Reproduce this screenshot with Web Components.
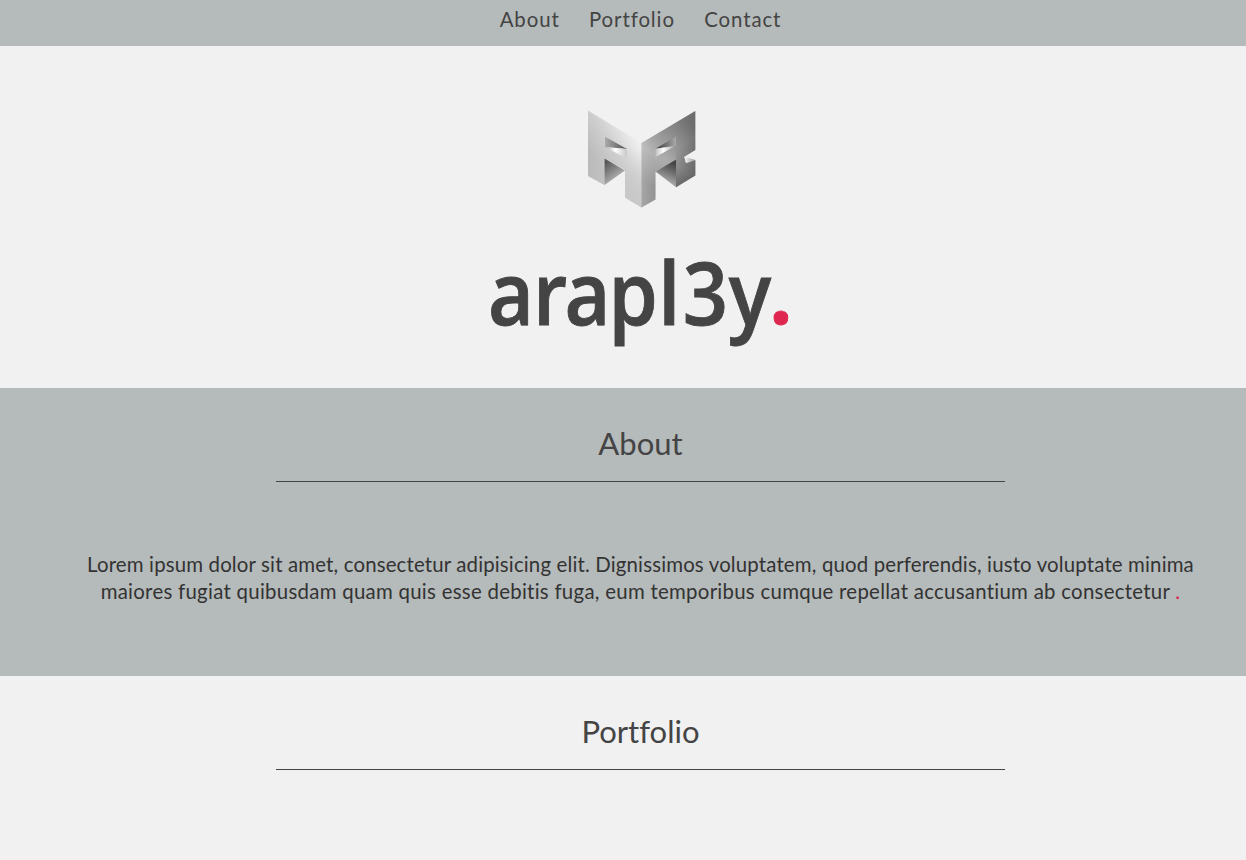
<!DOCTYPE html>
<html lang="en"><head><meta charset="utf-8"><title>arapl3y</title>
<style>
html,body{margin:0;background:#f1f1f1}
html{overflow:hidden}
body{height:860px;overflow:hidden;font-family:Lato,"Open Sans",sans-serif;color:#444}
</style></head><body>
<ar-page>
  <ar-nav></ar-nav>
  <ar-hero></ar-hero>
  <ar-section tone="dark" heading="About"><ar-copy></ar-copy></ar-section>
  <ar-section heading="Portfolio"></ar-section>
</ar-page>
<script>
const define=(name,html)=>customElements.define(name,class extends HTMLElement{
  constructor(){super();this.attachShadow({mode:'open'}).innerHTML=html;}
  connectedCallback(){const h=this.shadowRoot.querySelector('h2');if(h)h.textContent=this.getAttribute('heading');}
});
define('ar-page',`<style>:host{display:block;width:1281px}</style><slot></slot>`);
define('ar-nav',`<style>
:host{display:block;height:46px;background:#b5baba}
nav{display:flex;justify-content:center;gap:29.3px;padding-top:7px}
a{font-size:20.4px;line-height:24px;color:#444;text-decoration:none;letter-spacing:.92px;white-space:nowrap}
</style><nav><a>About</a><a>Portfolio</a><a>Contact</a></nav>`);
define('ar-mark',`<style>:host{display:block;width:110px;height:100px}svg{display:block}</style>
<svg width="110" height="100" viewBox="586 109 110 100">
<defs>
<linearGradient id="l" x1="588" y1="165" x2="640" y2="135" gradientUnits="userSpaceOnUse"><stop stop-color="#b4b4b4"/><stop offset=".55" stop-color="#d2d2d2"/><stop offset="1" stop-color="#f6f6f6"/></linearGradient>
<linearGradient id="l2" x1="0" y1="150" x2="0" y2="208" gradientUnits="userSpaceOnUse"><stop stop-color="#c8c8c8" stop-opacity="0"/><stop offset="1" stop-color="#c8c8c8"/></linearGradient>
<linearGradient id="r" x1="650" y1="185" x2="686" y2="122" gradientUnits="userSpaceOnUse"><stop stop-color="#8c8c8c"/><stop offset=".4" stop-color="#b0b0b0"/><stop offset="1" stop-color="#777"/></linearGradient>
<linearGradient id="r2" x1="641" y1="0" x2="695" y2="0" gradientUnits="userSpaceOnUse"><stop stop-color="#ddd" stop-opacity=".35"/><stop offset=".45" stop-color="#999" stop-opacity=".1"/><stop offset="1" stop-color="#555" stop-opacity=".35"/></linearGradient>
<linearGradient id="s" x1="672" y1="152" x2="692" y2="180" gradientUnits="userSpaceOnUse"><stop stop-color="#444" stop-opacity="0"/><stop offset="1" stop-color="#444" stop-opacity=".6"/></linearGradient>
<linearGradient id="d" x1="604" y1="163" x2="617" y2="180" gradientUnits="userSpaceOnUse"><stop stop-color="#555"/><stop offset="1" stop-color="#b5b5b5"/></linearGradient>
<linearGradient id="e" x1="674" y1="163" x2="666" y2="181" gradientUnits="userSpaceOnUse"><stop stop-color="#444"/><stop offset=".5" stop-color="#707070"/><stop offset="1" stop-color="#a5a5a5"/></linearGradient>
<linearGradient id="h" x1="605" y1="0" x2="627" y2="0" gradientUnits="userSpaceOnUse"><stop stop-color="#aaa"/><stop offset="1" stop-color="#505050"/></linearGradient>
<linearGradient id="w" x1="605" y1="0" x2="627" y2="0" gradientUnits="userSpaceOnUse"><stop stop-color="#aaa"/><stop offset=".45" stop-color="#fff"/><stop offset="1" stop-color="#c8c8c8"/></linearGradient>
<linearGradient id="k" x1="655" y1="0" x2="676" y2="0" gradientUnits="userSpaceOnUse"><stop stop-color="#333"/><stop offset="1" stop-color="#aaa"/></linearGradient>
<linearGradient id="m" x1="655" y1="0" x2="676" y2="0" gradientUnits="userSpaceOnUse"><stop stop-color="#bbb"/><stop offset=".4" stop-color="#fff"/><stop offset="1" stop-color="#999"/></linearGradient>
<linearGradient id="n" x1="684" y1="0" x2="695" y2="0" gradientUnits="userSpaceOnUse"><stop stop-color="#fafafa"/><stop offset="1" stop-color="#999"/></linearGradient>
</defs>
<path d="M588 110.5L641.5 143V207.5L625 197.5V170L604.5 158.5V185L588 176Z" fill="url(#l)"/>
<path d="M588 110.5L641.5 143V207.5L625 197.5V170L604.5 158.5V185L588 176Z" fill="url(#l2)"/>
<path d="M604.5 158.5L625 170.5L604.5 185Z" fill="url(#d)"/>
<path d="M605 136.7L627 149L605 147Z" fill="url(#h)"/><path d="M605 147L627 149V158.5Z" fill="url(#w)"/>
<path d="M641.5 143L695.3 111V150L684.3 156.7L686 163L695.3 160V175.5L676 187.2V159.5L655.5 171.5V199.5L641.5 207.5Z" fill="url(#r)"/>
<path d="M641.5 143L695.3 111V150L684.3 156.7L686 163L695.3 160V175.5L676 187.2V159.5L655.5 171.5V199.5L641.5 207.5Z" fill="url(#r2)"/>
<path d="M676 140L695.3 140V150L684.3 156.7L686 163L695.3 160V175.5L676 187.2Z" fill="url(#s)"/>
<path d="M655.5 171.5L676 159.5V187.2Z" fill="url(#e)"/>
<path d="M655.5 148.8L676 136.5V145.8Z" fill="url(#k)"/><path d="M655.5 148.8L676 145.8L655.5 157Z" fill="url(#m)"/>
<path d="M684.3 156.7L695.3 160L686 163Z" fill="url(#n)"/>
</svg>`);
define('ar-hero',`<style>
:host{display:flex;flex-direction:column;align-items:center;height:342px;box-sizing:border-box;padding-top:63px}
h1{margin:32px 0 0;width:310px;height:110px}svg{display:block;overflow:visible}
text{font-family:"Open Sans",sans-serif;font-weight:600;font-size:87px;fill:#444;stroke:#444;stroke-width:.9px}
</style><ar-mark></ar-mark>
<h1><svg width="310" height="110" viewBox="486 240 310 110"><g transform="translate(488 323.5) scale(.91 1)"><text x="0 49.5 84 132.5 187 214 264.5" y="0">arapl3y</text></g><text x="767.8" y="323" style="fill:#df264e;stroke:#df264e;font-size:96px">.</text></svg></h1>`);
define('ar-section',`<style>
:host{display:block;height:288px;box-sizing:border-box;padding-top:37px}
:host(:not([tone=dark])){height:184px}
:host([tone=dark]){background:#b5baba}
h2{width:729px;margin:0 auto;height:56px;border-bottom:1px solid #444;text-align:center;font-size:31px;line-height:36px;font-weight:400;color:#444;font-variant-ligatures:none}
</style><h2></h2><slot></slot>`);
define('ar-copy',`<style>
:host{display:block;padding-top:69px;text-align:center;font-size:20.4px;line-height:27px;color:#333}
p{margin:0;white-space:nowrap;letter-spacing:.16px}.b{letter-spacing:.28px}i{font-style:normal;color:#df264e}
</style><p><span>Lorem ipsum dolor sit amet, consectetur adipisicing elit. Dignissimos voluptatem, quod perferendis, iusto voluptate minima</span><br><span class="b">maiores fugiat quibusdam quam quis esse debitis fuga, eum temporibus cumque repellat accusantium ab consectetur <i>.</i></span></p>`);
</script></body></html>
